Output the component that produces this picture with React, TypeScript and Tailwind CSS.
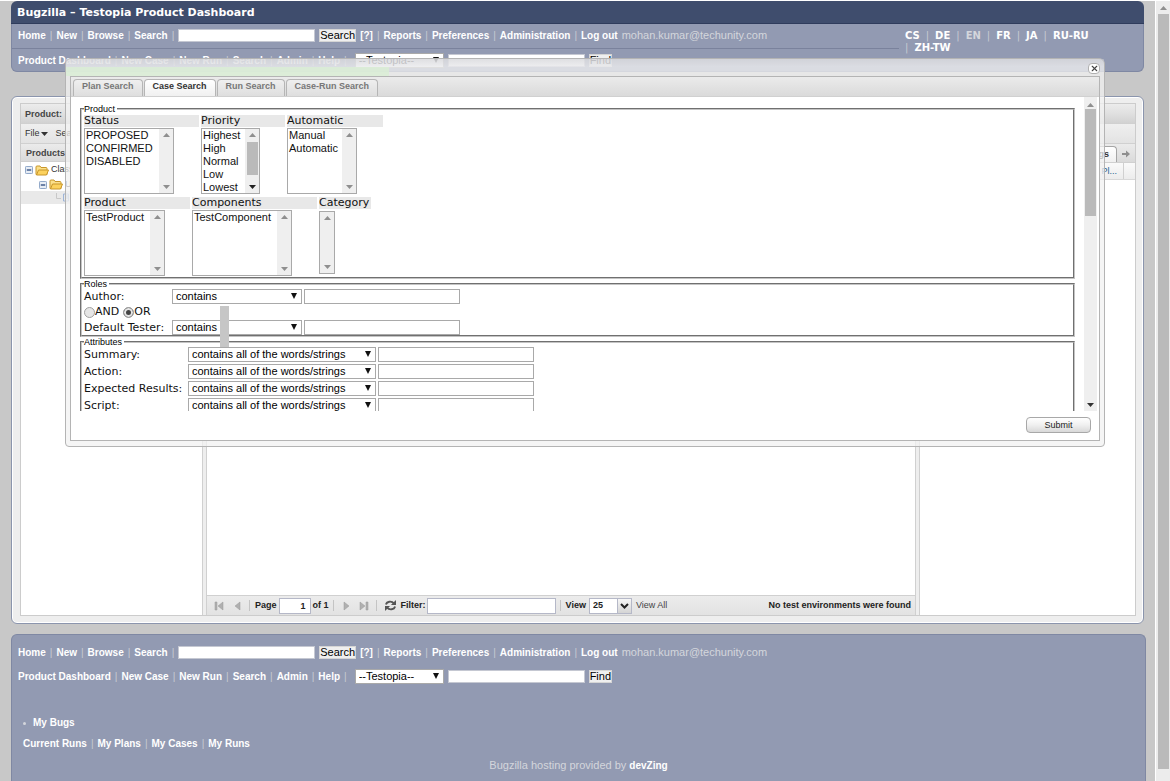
import React, { useState } from 'react';
import { X } from 'lucide-react';

const sans = "font-['Liberation_Sans',Arial,sans-serif]";
const verdana = "font-['DejaVu_Sans',Verdana,sans-serif]";

const conditions = ['contains', 'contains all of the words/strings', 'is equal to'];

const Sep = () => <span className="mx-1 font-normal text-[#c9cbd3]">|</span>;

const Arrow = ({ up = false, className = 'text-[#8f8f8f]' }: { up?: boolean; className?: string }) => (
  <svg viewBox="0 0 7 4" className={`w-[7px] h-1 shrink-0 ${className}`} fill="currentColor">
    <path d={up ? 'M0 4 3.5 0 7 4Z' : 'M0 0 3.5 4 7 0Z'} />
  </svg>
);

const NavLinks = ({ items }: { items: string[] }) => (
  <>
    {items.map((item) => (
      <React.Fragment key={item}>
        <a href="#" className="text-white">{item}</a>
        <Sep />
      </React.Fragment>
    ))}
  </>
);

const PillButton = ({ children }: { children: React.ReactNode }) => (
  <button className="h-[13px] bg-[#efefef] border border-[#d5d5d5] text-[11px] leading-[11px] font-normal text-black">
    {children}
  </button>
);

const MainNav = () => (
  <div className="h-6 pb-0.5 flex items-center text-[10px] font-bold text-white whitespace-nowrap">
    <NavLinks items={['Home', 'New', 'Browse', 'Search']} />
    <input aria-label="Quick search" className="w-[137px] h-[13px] bg-white border border-[#c5c8d2]" />
    <div className="ml-1 mr-1 flex"><PillButton>Search</PillButton></div>
    <NavLinks items={['[?]', 'Reports', 'Preferences', 'Administration']} />
    <a href="#">Log out</a>
    <span className="ml-1 text-[11px] font-normal text-[#d4d6dc]">mohan.kumar@techunity.com</span>
  </div>
);

const ProductNav = () => (
  <div className="h-6 pb-0.5 flex items-center text-[10px] font-bold text-white whitespace-nowrap">
    <NavLinks items={['Product Dashboard', 'New Case', 'New Run', 'Search', 'Admin', 'Help']} />
    <div className="ml-1 w-[89px]">
      <DropDown label="Testopia search type" options={['--Testopia--']} />
    </div>
    <input aria-label="Find text" className="ml-1 mr-1 w-[137px] h-[13px] bg-white border border-[#c5c8d2]" />
    <PillButton>Find</PillButton>
  </div>
);

interface DropDownProps {
  label: string;
  options: string[];
  value?: string;
}

const DropDown = ({ label, options, value }: DropDownProps) => (
  <div className="relative">
    <select
      aria-label={label}
      defaultValue={value}
      className="block w-full h-[15px] pl-[3px] appearance-none bg-white border border-[#a9a9a9] text-[11px] leading-[13px] font-normal text-black"
    >
      {options.map((o) => <option key={o}>{o}</option>)}
    </select>
    <svg viewBox="0 0 6 6" className="absolute right-[5px] top-1 w-1.5 h-1.5 pointer-events-none" fill="#111">
      <path d="M0 0H6L3 6Z" />
    </svg>
  </div>
);

interface ListBoxProps {
  label: string;
  options: string[];
  headWidth: string;
  boxWidth: string;
  scrolls?: boolean;
}

const ListBox = ({ label, options, headWidth, boxWidth, scrolls }: ListBoxProps) => (
  <div className={headWidth}>
    <label htmlFor={`list-${label}`} className="block h-3 bg-[#e8e8e8] text-[11px] leading-3">{label}</label>
    <div className={`flex border border-[#a9a9a9] ${options.length ? 'mt-px h-[66px]' : 'mt-0.5 h-[63px]'} ${boxWidth}`}>
      <select
        id={`list-${label}`}
        multiple
        className={`flex-1 min-w-0 h-full overflow-hidden p-0 text-[11px] leading-3 bg-white [scrollbar-width:none] ${sans}`}
      >
        {options.map((o) => <option key={o} className="h-[13px] min-h-0 px-px py-0">{o}</option>)}
      </select>
      <div className="w-[14px] shrink-0 bg-[#efefef] flex flex-col items-center justify-between py-1">
        <Arrow up />
        {scrolls && <div className="w-[11px] h-[33px] mb-auto mt-[5px] bg-[#bababa]" />}
        <Arrow className={scrolls ? 'text-[#222]' : 'text-[#8f8f8f]'} />
      </div>
    </div>
  </div>
);

const groupClass = 'min-w-0 pl-[2px] border-2 border-[#c4c4c4] [border-style:groove]';
const legendClass = `h-[10px] pr-0.5 text-[9px] leading-[10px] text-black ${sans}`;

const ConditionRow = ({ label, value, labelWidth, selectWidth }: { label: string; value: string; labelWidth: string; selectWidth: string }) => (
  <div className="flex items-center h-[15px]">
    <label htmlFor={`text-${label}`} className={`${labelWidth} shrink-0 text-[11px] leading-[15px] whitespace-nowrap`}>{label}</label>
    <div className={`${selectWidth} ${sans}`}>
      <DropDown label={`${label} condition`} options={conditions} value={value} />
    </div>
    <input id={`text-${label}`} className="ml-0.5 w-[156px] h-[15px] bg-white border border-[#a9a9a9]" />
  </div>
);

const Radio = ({ label, checked = false }: { label: string; checked?: boolean }) => (
  <label className="flex items-center">
    <input
      type="radio"
      name="role-join"
      defaultChecked={checked}
      className="appearance-none w-[11px] h-[11px] rounded-full border border-[#a0a0a0] bg-[#e6e6e6] checked:bg-[#444] checked:shadow-[inset_0_0_0_2px_#e6e6e6]"
    />
    {label}
  </label>
);

const CaseSearchForm = () => (
  <form className={`relative flex-1 min-w-0 pt-[7px] pl-[9px] pr-[9px] text-[#111] ${verdana}`}>
    <fieldset className={`pb-px ${groupClass}`}>
      <legend className={legendClass}>Product</legend>
      <div className="mt-px flex gap-0.5">
        <ListBox label="Status" options={['PROPOSED', 'CONFIRMED', 'DISABLED']} headWidth="w-[115px]" boxWidth="w-[90px]" />
        <ListBox label="Priority" options={['Highest', 'High', 'Normal', 'Low', 'Lowest']} headWidth="w-[84px]" boxWidth="w-[59px]" scrolls />
        <ListBox label="Automatic" options={['Manual', 'Automatic']} headWidth="w-24" boxWidth="w-[70px]" />
      </div>
      <div className="mt-[3px] flex gap-0.5">
        <ListBox label="Product" options={['TestProduct']} headWidth="w-[106px]" boxWidth="w-[81px]" />
        <ListBox label="Components" options={['TestComponent']} headWidth="w-[125px]" boxWidth="w-[100px]" />
        <ListBox label="Category" options={[]} headWidth="w-[52px]" boxWidth="w-4" />
      </div>
    </fieldset>

    <fieldset className={groupClass}>
      <legend className={legendClass}>Roles</legend>
      <ConditionRow label="Author:" value="contains" labelWidth="w-[88px]" selectWidth="w-[130px]" />
      <div className="h-4 flex items-center gap-1 text-[11px] leading-4">
        <Radio label="AND" />
        <Radio label="OR" checked />
      </div>
      <ConditionRow label="Default Tester:" value="contains" labelWidth="w-[88px]" selectWidth="w-[130px]" />
    </fieldset>

    <fieldset className={`h-24 ${groupClass}`}>
      <legend className={legendClass}>Attributes</legend>
      <div className="flex flex-col gap-0.5">
        {['Summary:', 'Action:', 'Expected Results:', 'Script:'].map((l) => (
          <ConditionRow key={l} label={l} value="contains all of the words/strings" labelWidth="w-[104px]" selectWidth="w-[188px]" />
        ))}
      </div>
    </fieldset>

    <div className="absolute left-[149px] top-[209px] w-[9px] h-[41px] bg-[#c6c6c6]" />
  </form>
);

const SearchDialog = ({ onClose }: { onClose: () => void }) => {
  const [tab, setTab] = useState('Case Search');
  return (
    <div
      role="dialog"
      aria-label="Search"
      className="absolute left-[65px] right-[65px] top-[57px] px-1 pb-[5px] bg-[#f2f2f2]/75 border border-[#b4b4b4] rounded-t-md rounded-b-sm"
    >
      <div className="h-[17px] -mx-1 flex flex-col">
        <div className="h-2 bg-linear-to-b from-[#c8c9cf]/50 to-[#dedfe5]/30" />
        <div className="h-[9px] w-[323px] bg-[#d9efd5]/80" />
      </div>
      <button
        onClick={onClose}
        aria-label="Close"
        className="absolute right-1 top-1 w-3 h-[11px] flex items-center justify-center bg-white border border-[#b0b0b0] rounded-sm"
      >
        <X size={9} strokeWidth={3} className="text-[#444] shrink-0" />
      </button>

      <div className="border border-[#b4b4b4] bg-white">
        <div className="h-5 pt-0.5 px-0.5 flex gap-px bg-linear-to-b from-[#ebebeb] to-[#dadada] border-b border-[#d0d0d0]">
          {['Plan Search', 'Case Search', 'Run Search', 'Case-Run Search'].map((t) => (
            <button
              key={t}
              onClick={() => setTab(t)}
              className={`h-[17px] px-2 pb-[3px] text-[9px] leading-[13px] font-bold border border-b-0 border-[#b5b5b5] rounded-t-sm ${t === tab ? 'bg-linear-to-b from-white to-[#f0f0f0] text-[#333]' : 'bg-linear-to-b from-[#efefef] to-[#dedede] text-[#777]'}`}
            >
              {t}
            </button>
          ))}
        </div>
        <div className="h-[314px] flex overflow-hidden">
          <CaseSearchForm />
          <div className="w-[13px] mr-0.5 shrink-0 flex flex-col items-center bg-[#efefef] pt-1.5 pb-1">
            <Arrow up />
            <div className="mt-0.5 mb-auto w-[11px] h-[107px] bg-[#bababa]" />
            <Arrow className="text-[#333]" />
          </div>
        </div>
        <div className="h-[29px] pt-[6px] pr-2 flex justify-end items-start">
          <button className="w-[65px] h-4 text-[9px] leading-[14px] text-[#222] border border-[#a8a8a8] rounded-sm bg-linear-to-b from-white via-[#f0f0f0] to-[#d8d8d8]">
            Submit
          </button>
        </div>
      </div>
    </div>
  );
};

const Expander = () => (
  <svg viewBox="0 0 9 9" className="w-2 h-2 shrink-0">
    <rect x=".5" y=".5" width="8" height="8" rx="1" fill="#e7edf5" stroke="#7f9ac0" />
    <path d="M2 4.5h5" stroke="#1f3f78" strokeWidth="1.4" />
  </svg>
);

const Folder = () => (
  <svg viewBox="0 0 14 11" className="w-[14px] h-[11px] shrink-0">
    <path d="M1 9.5V2q0-1 1-1h3l1 1.5h5q1 0 1 1V9.500Z" fill="#fbe08a" stroke="#c8962a" />
    <path d="M1.500 10 3.500 5H13.500L11.500 10Z" fill="#fcd25e" stroke="#c8962a" />
  </svg>
);

const Divider = () => <span className="w-px h-[11px] bg-[#c4c4c4]" />;

const PageIcon = ({ label, d }: { label: string; d: string }) => (
  <button aria-label={label} className="w-3 h-3 flex items-center justify-center">
    <svg viewBox="0 0 10 10" className="w-[10px] h-[10px]" fill="#b0b0b0" stroke="#9b9b9b" strokeWidth=".5"><path d={d} /></svg>
  </button>
);

const RefreshIcon = () => (
  <svg viewBox="0 0 14 12" className="w-[13px] h-[11px]" fill="none" stroke="#555" strokeWidth="2">
    <path d="M2 5C3 1.500 8 .500 11 4" />
    <path d="M12 7C11 10.500 6 11.500 3 8" />
    <path d="M13 0v5.500H7.500ZM1 12V6.500h5.500Z" fill="#555" stroke="none" />
  </svg>
);

const PagingBar = () => (
  <div className="h-5 shrink-0 flex items-center pl-1.5 pr-1 text-[9px] font-bold text-[#222] bg-linear-to-b from-[#ececec] to-[#e2e2e2] border-t border-[#d0d0d0] whitespace-nowrap">
    <PageIcon label="First page" d="M1 1h2v8H1ZM9 1v8L4 5Z" />
    <div className="ml-1.5 mr-1.5 flex"><PageIcon label="Previous page" d="M8 1v8L3 5Z" /></div>
    <Divider />
    <label htmlFor="page" className="ml-[5px] mr-0.5">Page</label>
    <input id="page" defaultValue="1" className="w-8 h-4 pr-1 text-right text-[9px] font-bold bg-white border border-[#b5b8c8]" />
    <span className="ml-0.5 mr-1">of 1</span>
    <Divider />
    <div className="ml-1.5 mr-1.5 flex gap-1.5">
      <PageIcon label="Next page" d="M3 1v8L8 5Z" />
      <PageIcon label="Last page" d="M7 1h2v8H7ZM1 1v8L6 5Z" />
    </div>
    <Divider />
    <button aria-label="Refresh" className="ml-[7px] mr-1"><RefreshIcon /></button>
    <label htmlFor="filter" className="mr-px">Filter:</label>
    <input id="filter" className="w-[129px] h-4 bg-white border border-[#b5b8c8]" />
    <div className="ml-1 mr-[5px] flex"><Divider /></div>
    <label htmlFor="page-size" className="mr-[3px]">View</label>
    <div className="relative w-[43px]">
      <select id="page-size" className="block w-full h-4 pl-[3px] appearance-none bg-white border border-[#b5b8c8] text-[9px] font-bold">
        <option>25</option>
        <option>50</option>
      </select>
      <span className="absolute right-0 top-0 w-[15px] h-4 flex items-center justify-center bg-linear-to-b from-[#f6f6f6] to-[#d4d4d4] border border-[#b5b8c8] pointer-events-none">
        <svg viewBox="0 0 9 6" className="w-[9px] h-1.5" fill="none" stroke="#222" strokeWidth="2"><path d="M1 1 4.500 4.500 8 1" /></svg>
      </span>
    </div>
    <button className="ml-1 font-normal text-[#444]">View All</button>
    <span className="ml-auto">No test environments were found</span>
  </div>
);

const Splitter = () => <div className="w-[5px] shrink-0 bg-[#eee] border-x border-[#d0d0d0]" />;

const Workspace = () => (
  <div className="mt-6 pt-[6px] pb-[7px] pl-2 pr-[7px] bg-[#eee] border border-[#8b95ad] rounded-md shadow-[inset_0_0_0_1px_#fff]">
    <div className="border border-[#ccc]">
      <div className="h-5 pl-1 text-[9px] leading-[20px] font-bold text-[#444] bg-linear-to-b from-[#ececec] via-[#e0e0e0] to-[#d2d2d2] border-b border-[#d0d0d0]">
        Product:
      </div>
      <div className="h-5 pl-1 flex items-center gap-2 text-[9px] text-[#333] bg-linear-to-b from-[#efefef] to-[#e3e3e3] border-b border-[#d0d0d0]">
        <button className="flex items-center gap-px">File <Arrow className="text-[#333]" /></button>
        <button>Search</button>
      </div>
      <div className="flex min-h-[471px] bg-white">
        <div className="w-[181px] shrink-0 text-[9px] text-[#333]">
          <div className="h-[18px] pl-[5px] leading-[19px] font-bold text-[#444] bg-linear-to-b from-[#ebebeb] to-[#dadada] border-b border-[#d0d0d0]">
            Products
          </div>
          <div className="h-4 pl-1 flex items-center gap-0.5"><Expander /><Folder />Classification</div>
          <div className="h-[13px] pl-[18px] flex items-center gap-0.5"><Expander /><Folder />Unclassified</div>
          <div className="h-[13px] pl-[35px] flex items-center bg-[#e9e9e9]">
            <svg viewBox="0 0 14 9" className="w-[14px] h-[9px]" fill="none">
              <path d="M.5 0v5.500H5" stroke="#c8c8c8" />
              <path d="M7.500 1h5v7h-5ZM9 3h3M9 5h3" stroke="#9db4d8" />
            </svg>
          </div>
        </div>
        <Splitter />
        <div className="flex-1 min-w-0 flex flex-col justify-end">
          <PagingBar />
        </div>
        <Splitter />
        <div className="w-[215px] shrink-0 text-[9px]">
          <div className="h-[19px] flex items-end justify-end bg-linear-to-b from-[#ebebeb] to-[#dadada] border-b border-[#d0d0d0]">
            <button className="h-4 pl-2 pr-[7px] font-bold text-[#333] bg-linear-to-b from-white to-[#f0f0f0] border border-b-0 border-[#a5a5a5] rounded-t-sm">Bugs</button>
            <button aria-label="Scroll tabs" className="w-[18px] h-4 flex items-center justify-center">
              <svg viewBox="0 0 8 8" className="w-2 h-2" fill="#8e8e8e"><path d="M0 3h4V.500L8 4 4 7.500V5H0Z" /></svg>
            </button>
          </div>
          <div className="h-[17px] flex justify-end bg-linear-to-b from-[#fafafa] to-[#ececec] border-b border-[#d8d8d8]">
            <span className="pr-[6px] leading-[17px] text-[#25618f] border-r border-[#d0d0d0]">Pl...</span>
            <span className="w-[11px]" />
          </div>
        </div>
      </div>
    </div>
  </div>
);

const Header = () => (
  <header>
    <h1 className={`h-[23px] pl-[6px] text-[11px] leading-[23px] font-bold text-white bg-[#3f4d6d] border-b border-[#2f3c5c] rounded-t-md ${verdana}`}>
      Bugzilla – Testopia Product Dashboard
    </h1>
    <div className="h-12 flex bg-[#929ab2] border border-t-0 border-[#7f88a3] rounded-b-md">
      <div className="flex-1 min-w-0">
        <div className="pl-[6px] border-b border-[#7a829c]"><MainNav /></div>
        <div className="pl-[6px]"><ProductNav /></div>
      </div>
      <div className={`w-[244px] shrink-0 pl-[6px] pr-12 pt-[6px] text-[10px] leading-3 font-bold text-white whitespace-nowrap ${verdana}`}>
        {['CS', 'DE', 'EN', 'FR', 'JA', 'RU-RU'].map((lang, i) => (
          <React.Fragment key={lang}>
            {i > 0 && <span className="mx-1.5 font-normal text-[#c9cbd3]">|</span>}
            {lang === 'EN' ? <span className="text-[#d4d6dc]">EN</span> : <a href="#">{lang}</a>}
          </React.Fragment>
        ))}
        <br />
        <span className="mr-1.5 font-normal text-[#c9cbd3]">|</span>
        <a href="#">ZH-TW</a>
      </div>
    </div>
  </header>
);

const Footer = () => (
  <footer className="mt-[10px] -mr-0.5 grow pl-[6px] pt-[6px] bg-[#929ab2] border border-b-0 border-[#7f88a3] rounded-t-md">
    <MainNav />
    <ProductNav />
    <ul className="mt-[26px] pl-[5px] text-[10px] leading-4 font-bold text-white">
      <li className="flex items-center gap-[7px]">
        <span className="w-[3px] h-[3px] rounded-full bg-[#d4d6dc]" />
        <a href="#">My Bugs</a>
      </li>
    </ul>
    <div className="mt-1 pl-[5px] flex items-center text-[10px] leading-[18px] font-bold text-white">
      <NavLinks items={['Current Runs', 'My Plans', 'My Cases']} />
      <a href="#">My Runs</a>
    </div>
    <p className="mt-[3px] pr-1.5 text-center text-[11px] leading-[18px] text-[#d4d6dc]">
      Bugzilla hosting provided by <a href="#" className="text-[10px] font-bold text-white">devZing</a>
    </p>
  </footer>
);

const App: React.FC = () => {
  const [open, setOpen] = useState(true);

  return (
    <div className={`relative min-h-screen flex bg-[#c8c8c8] border-t border-white ${sans}`}>
      <main className="flex-1 min-w-0 px-[11px] flex flex-col">
        <Header />
        <Workspace />
        <Footer />
      </main>
      <div className="w-[15px] shrink-0 flex flex-col items-center pt-[5px] bg-[#ececec] border-l border-white">
        <Arrow up />
        <div className="mt-1 mb-3 w-[11px] grow bg-[#bababa]" />
      </div>
      {open && <SearchDialog onClose={() => setOpen(false)} />}
    </div>
  );
};

export default App;
